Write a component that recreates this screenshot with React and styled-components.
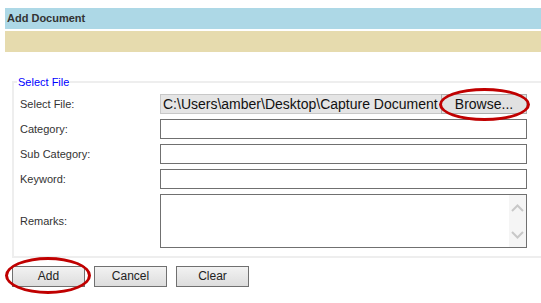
import React from "react";
import styled, { createGlobalStyle } from "styled-components";

const GlobalStyle = createGlobalStyle`
  body {
    margin: 0;
    background: #fff;
    font-family: "Liberation Sans", Arial, sans-serif;
    overflow: hidden;
  }
`;

const Page = styled.div`
  width: 541px;
  height: 303px;
  padding: 8px 0 0 5px;
  box-sizing: border-box;
  overflow: hidden;
`;

const TitleBar = styled.div`
  height: 21px;
  line-height: 21px;
  background: #add8e6;
  color: #333;
  font-weight: 700;
  font-size: 11px;
  padding-left: 2px;
`;

const InfoBar = styled.div`
  height: 21px;
  margin-top: 2px;
  background: #e6dbae;
`;

const Fieldset = styled.fieldset`
  margin: 24px 0 0 7px;
  width: 560px;
  box-sizing: border-box;
  border: 2px solid #eeeeee;
  padding: 6px 0 8px 6px;
`;

const Legend = styled.legend`
  color: #0000ff;
  font-size: 11px;
  padding: 0 1px;
  margin-left: -3px;
`;

const Form = styled.div`
  display: grid;
  grid-template-columns: 140px 367px;
  grid-template-rows: 20px 20px 20px 20px 54px;
  row-gap: 5px;
  align-items: center;
`;

const Label = styled.div`
  font-size: 11px;
  color: #333;
`;

const Input = styled.div`
  height: 20px;
  box-sizing: border-box;
  border: 1px solid #707070;
  background: #fff;
`;

const FileBox = styled.div`
  height: 20px;
  box-sizing: border-box;
  display: flex;
  align-items: stretch;
  background: #e5e5e5;
  border: 1px solid #c8c8c8;
`;

const FilePath = styled.div`
  flex: 1;
  min-width: 0;
  white-space: nowrap;
  font-size: 14px;
  line-height: 18px;
  color: #111;
  padding-left: 2px;
`;

const BrowseButton = styled.div`
  position: relative;
  width: 86px;
  margin: -1px -1px -1px 0;
  box-sizing: border-box;
  border: 1px solid #adadad;
  background: #e1e1e1;
  font-size: 14px;
  line-height: 18px;
  text-align: center;
  color: #111;
`;

const Circle = styled.div`
  position: absolute;
  top: ${({ $t }) => $t}px;
  bottom: ${({ $b }) => $b}px;
  left: ${({ $l }) => $l}px;
  right: ${({ $r }) => $r}px;
  border: 3px solid #c00000;
  border-radius: 50%;
  pointer-events: none;
`;

const TextArea = styled.div`
  height: 54px;
  box-sizing: border-box;
  border: 1px solid #707070;
  background: #fff;
  display: flex;
  justify-content: flex-end;
`;

const ScrollTrack = styled.div`
  width: 17px;
  background: #f5f5f5;
  display: flex;
  flex-direction: column;
  justify-content: space-between;
  align-items: center;
  padding: 9px 0 8px;
`;

const ButtonRow = styled.div`
  display: flex;
  gap: 9px;
  margin: 8px 0 0 7px;
`;

const Button = styled.div`
  position: relative;
  width: 73px;
  height: 21px;
  box-sizing: border-box;
  border: 1px solid #707070;
  background: linear-gradient(#f2f2f2, #dddddd);
  font-size: 12px;
  line-height: 19px;
  text-align: center;
  color: #222;
`;

const Chevron = ({ up }) => (
  <svg width="13" height="8" viewBox="0 0 13 8">
    <path
      d={up ? "M1 7 L6.5 1.5 L12 7" : "M1 1 L6.5 6.5 L12 1"}
      fill="none"
      stroke="#c8c8c8"
      strokeWidth="2"
    />
  </svg>
);

export default function App() {
  return (
    <>
      <GlobalStyle />
      <Page>
        <TitleBar>Add Document</TitleBar>
        <InfoBar />
        <Fieldset>
          <Legend>Select File</Legend>
          <Form>
            <Label>Select File:</Label>
            <FileBox>
              <FilePath>C:\Users\amber\Desktop\Capture Document</FilePath>
              <BrowseButton>
                Browse...
                <Circle $t={-7} $b={-8} $l={-3} $r={-4} />
              </BrowseButton>
            </FileBox>
            <Label>Category:</Label>
            <Input />
            <Label>Sub Category:</Label>
            <Input />
            <Label>Keyword:</Label>
            <Input />
            <Label>Remarks:</Label>
            <TextArea>
              <ScrollTrack>
                <Chevron up />
                <Chevron />
              </ScrollTrack>
            </TextArea>
          </Form>
        </Fieldset>
        <ButtonRow>
          <Button>
            Add
            <Circle $t={-10} $b={-8} $l={-8} $r={-7} />
          </Button>
          <Button>Cancel</Button>
          <Button>Clear</Button>
        </ButtonRow>
      </Page>
    </>
  );
}
